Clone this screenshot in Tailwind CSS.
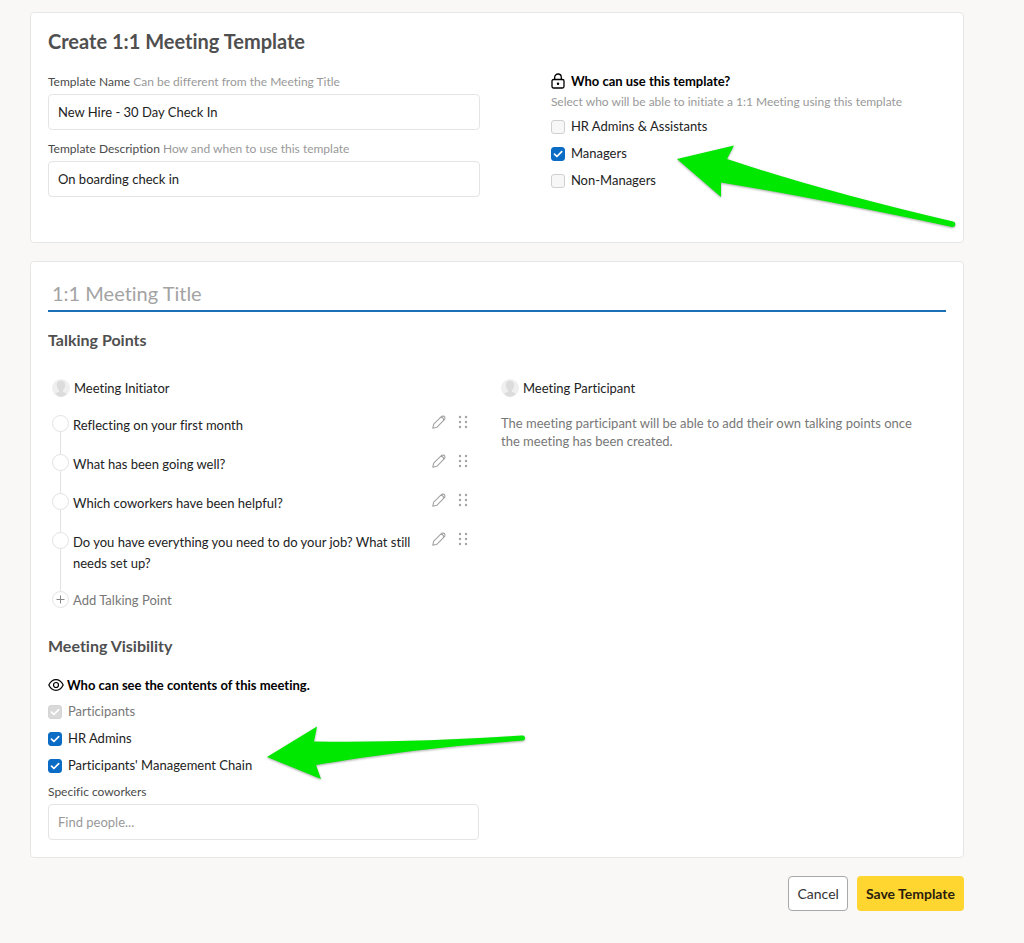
<!DOCTYPE html>
<html lang="en">
<head>
  <meta charset="UTF-8">
  <meta name="viewport" content="width=device-width, initial-scale=1.0">

  <title>Create 1:1 Meeting Template</title>

  <script src="https://cdn.jsdelivr.net/npm/@tailwindcss/browser@4"></script>
</head>
<body class="min-h-screen bg-[#faf8f6] pt-3 pb-8 pl-[30px] pr-[60px] font-['Lato',sans-serif] text-[13px] text-[#222] [font-variant-ligatures:none]">

  <!-- icons used more than once -->
  <svg class="hidden">
    <symbol id="check" viewBox="0 0 14 14">
      <path d="M3.500 7.200l2.400 2.300 4.800-4.900" fill="none" stroke="currentColor" stroke-width="1.700" stroke-linecap="round" stroke-linejoin="round"/>
    </symbol>
    <symbol id="avatar" viewBox="0 0 18 18">
      <circle cx="9" cy="9" r="9" fill="#efefef"/>
      <path d="M9 1.800c-2.800 0-4.400 1.900-4.200 4.500.1 2.200 1 3.900 2.200 4.900v1.600c-1.500.7-3 1.200-3.900 2A9 9 0 0 0 9 18a9 9 0 0 0 5.900-3.200c-.9-.8-2.400-1.300-3.900-2v-1.600c1.200-1 2.100-2.700 2.200-4.900.1-2.600-1.400-4.500-4.200-4.500z" fill="#dcdcdc"/>
    </symbol>
    <symbol id="pencil" viewBox="0 0 14 14">
      <path d="M.8 13.200l.9-4 7.600-7.600a1.900 1.900 0 0 1 1.300-.5h.7a1.700 1.700 0 0 1 1.600 1.600v.7a1.900 1.900 0 0 1-.5 1.300l-7.600 7.600zM8.600 2.400l1.700.1 1.100 1.100.1 1.900" fill="none" stroke="currentColor" stroke-width="1.100" stroke-linejoin="round"/>
    </symbol>
    <symbol id="grip" viewBox="0 0 10 14">
      <g fill="currentColor">
        <circle cx="2" cy="2" r="1.200"/><circle cx="8" cy="2" r="1.200"/>
        <circle cx="2" cy="7" r="1.200"/><circle cx="8" cy="7" r="1.200"/>
        <circle cx="2" cy="12" r="1.200"/><circle cx="8" cy="12" r="1.200"/>
      </g>
    </symbol>
  </svg>

  <form>
    <section class="relative flex rounded border border-[#e8e6e4] bg-white px-[17px] pt-3.5 pb-[45px]">
      <div class="w-[56%]">
        <h1 class="text-xl leading-7 font-bold text-[#4f4f4f]">Create 1:1 Meeting Template</h1>

        <div class="mt-[19px] w-[86%]">
          <label for="name" class="block text-xs leading-4 text-[#4a4a4a]">Template Name <span class="text-[#999]">Can be different from the Meeting Title</span></label>
          <input id="name" type="text" value="New Hire - 30 Day Check In" class="mt-1 block h-9 w-full rounded border border-[#e4e4e4] px-[9px] outline-none">
        </div>

        <div class="mt-[11px] w-[86%]">
          <label for="description" class="block text-xs leading-4 text-[#4a4a4a]">Template Description <span class="text-[#999]">How and when to use this template</span></label>
          <input id="description" type="text" value="On boarding check in" class="mt-1 block h-9 w-full rounded border border-[#e4e4e4] px-[9px] outline-none">
        </div>
      </div>

      <fieldset class="flex-1 pt-11">
        <h2 class="flex items-center gap-1.5 leading-5 font-bold text-black">
          <svg class="h-4 w-[14px]" viewBox="0 0 14 16" fill="none" stroke="currentColor" stroke-width="1.300">
            <rect x="1" y="6.500" width="12" height="8.500" rx="1.500"/>
            <path d="M3.700 6.500V4.300a3.300 3.300 0 0 1 6.600 0v2.200"/>
            <circle cx="7" cy="10.800" r=".6" fill="currentColor"/>
          </svg>
          Who can use this template?
        </h2>
        <p class="mt-[3px] text-xs leading-4 text-[#999]">Select who will be able to initiate a 1:1 Meeting using this template</p>

        <div class="mt-[3px]">
          <label class="flex h-[27px] items-center gap-1.5">
            <span class="grid">
              <input type="checkbox" class="peer col-start-1 row-start-1 size-3.5 appearance-none rounded-[3px] border border-[#d0d0d0] bg-[#f7f7f7] checked:border-[#0b6cc6] checked:bg-[#0b6cc6]">
              <svg class="pointer-events-none invisible col-start-1 row-start-1 size-3.5 text-white peer-checked:visible"><use href="#check"/></svg>
            </span>
            HR Admins &amp; Assistants
          </label>
          <label class="flex h-[27px] items-center gap-1.5">
            <span class="grid">
              <input type="checkbox" checked class="peer col-start-1 row-start-1 size-3.5 appearance-none rounded-[3px] border border-[#d0d0d0] bg-[#f7f7f7] checked:border-[#0b6cc6] checked:bg-[#0b6cc6]">
              <svg class="pointer-events-none invisible col-start-1 row-start-1 size-3.5 text-white peer-checked:visible"><use href="#check"/></svg>
            </span>
            Managers
          </label>
          <label class="flex h-[27px] items-center gap-1.5">
            <span class="grid">
              <input type="checkbox" class="peer col-start-1 row-start-1 size-3.5 appearance-none rounded-[3px] border border-[#d0d0d0] bg-[#f7f7f7] checked:border-[#0b6cc6] checked:bg-[#0b6cc6]">
              <svg class="pointer-events-none invisible col-start-1 row-start-1 size-3.5 text-white peer-checked:visible"><use href="#check"/></svg>
            </span>
            Non-Managers
          </label>
        </div>
      </fieldset>

      <!-- callout arrow -->
      <svg class="pointer-events-none absolute top-[127px] right-[3px] h-[92px] w-[284px] drop-shadow-[0_1px_1px_rgba(0,0,0,0.35)]" viewBox="0 0 284 92">
        <path d="M1 19L58 5.500L51 19Q150 52 277 81.500A2.500 2.500 0 0 1 276 87Q150 60 45 42.500L45 57z" fill="#00e800"/>
      </svg>
    </section>

    <section class="mt-[18px] rounded border border-[#e8e6e4] bg-white px-[17px] pt-[13px] pb-[17px]">
      <input type="text" aria-label="1:1 Meeting Title" placeholder="1:1 Meeting Title" class="block h-[37px] w-full border-b-2 border-[#1b70b8] px-1 text-xl outline-none placeholder:text-[#a3a3a3]">

      <h2 class="mt-[18px] text-base leading-5 font-bold text-[#4f4f4f]">Talking Points</h2>

      <div class="mt-7 grid grid-cols-2">
        <div class="pl-1">
          <h3 class="flex items-center gap-1 leading-5">
            <svg class="size-[18px]"><use href="#avatar"/></svg>
            Meeting Initiator
          </h3>

          <ul class="mt-[17px] w-[420px] max-w-full">
            <li class="flex">
              <div class="mr-1 flex w-[17px] flex-col items-center">
                <span class="size-[17px] shrink-0 rounded-full border border-[#e2e2e2]"></span>
                <span class="w-px flex-1 bg-[#e2e2e2]"></span>
              </div>
              <p class="flex-1 pb-[18px] leading-[21px]">Reflecting on your first month</p>
              <button type="button" aria-label="Edit" class="ml-2 flex h-3.5 text-[#a3a3a3]"><svg class="size-3.5"><use href="#pencil"/></svg></button>
              <button type="button" aria-label="Move" class="mr-1 ml-3 flex h-3.5 text-[#a3a3a3]"><svg class="h-3.5 w-2.5"><use href="#grip"/></svg></button>
            </li>
            <li class="flex">
              <div class="mr-1 flex w-[17px] flex-col items-center">
                <span class="size-[17px] shrink-0 rounded-full border border-[#e2e2e2]"></span>
                <span class="w-px flex-1 bg-[#e2e2e2]"></span>
              </div>
              <p class="flex-1 pb-[18px] leading-[21px]">What has been going well?</p>
              <button type="button" aria-label="Edit" class="ml-2 flex h-3.5 text-[#a3a3a3]"><svg class="size-3.5"><use href="#pencil"/></svg></button>
              <button type="button" aria-label="Move" class="mr-1 ml-3 flex h-3.5 text-[#a3a3a3]"><svg class="h-3.5 w-2.5"><use href="#grip"/></svg></button>
            </li>
            <li class="flex">
              <div class="mr-1 flex w-[17px] flex-col items-center">
                <span class="size-[17px] shrink-0 rounded-full border border-[#e2e2e2]"></span>
                <span class="w-px flex-1 bg-[#e2e2e2]"></span>
              </div>
              <p class="flex-1 pb-[18px] leading-[21px]">Which coworkers have been helpful?</p>
              <button type="button" aria-label="Edit" class="ml-2 flex h-3.5 text-[#a3a3a3]"><svg class="size-3.5"><use href="#pencil"/></svg></button>
              <button type="button" aria-label="Move" class="mr-1 ml-3 flex h-3.5 text-[#a3a3a3]"><svg class="h-3.5 w-2.5"><use href="#grip"/></svg></button>
            </li>
            <li class="flex">
              <div class="mr-1 flex w-[17px] flex-col items-center">
                <span class="size-[17px] shrink-0 rounded-full border border-[#e2e2e2]"></span>
                <span class="w-px flex-1 bg-[#e2e2e2]"></span>
              </div>
              <p class="flex-1 pb-[17px] leading-[21px]">Do you have everything you need to do your job? What still needs set up?</p>
              <button type="button" aria-label="Edit" class="ml-2 flex h-3.5 text-[#a3a3a3]"><svg class="size-3.5"><use href="#pencil"/></svg></button>
              <button type="button" aria-label="Move" class="mr-1 ml-3 flex h-3.5 text-[#a3a3a3]"><svg class="h-3.5 w-2.5"><use href="#grip"/></svg></button>
            </li>
          </ul>

          <button type="button" class="flex items-center gap-1 leading-4 text-[#777]">
            <svg class="size-[17px]" viewBox="0 0 17 17" fill="none">
              <circle cx="8.500" cy="8.500" r="8" stroke="#e2e2e2"/>
              <path d="M4.500 8.500h8M8.500 4.500v8" stroke="#888"/>
            </svg>
            Add Talking Point
          </button>
        </div>

        <div class="pl-1">
          <h3 class="flex items-center gap-1 leading-5">
            <svg class="size-[18px]"><use href="#avatar"/></svg>
            Meeting Participant
          </h3>
          <p class="mt-4 pr-4 leading-[18px] text-[#777]">The meeting participant will be able to add their own talking points once the meeting has been created.</p>
        </div>
      </div>

      <h2 class="mt-7 text-base leading-5 font-bold text-[#4f4f4f]">Meeting Visibility</h2>

      <div class="relative mt-[19px]">
        <h3 class="flex items-center gap-[3px] leading-5 font-bold text-black">
          <svg class="h-4 w-4" viewBox="0 0 16 16" fill="none" stroke="currentColor" stroke-width="1.200">
            <path d="M.8 8C2.500 4.600 5 2.700 8 2.700s5.500 1.900 7.200 5.300C13.500 11.400 11 13.300 8 13.300S2.500 11.400.8 8z"/>
            <circle cx="8" cy="8" r="2.500"/>
          </svg>
          Who can see the contents of this meeting.
        </h3>

        <div class="mt-[3px]">
          <label class="flex h-[27px] items-center gap-1.5 text-[#777]">
            <span class="grid">
              <input type="checkbox" checked disabled class="col-start-1 row-start-1 size-3.5 appearance-none rounded-[3px] border border-[#d4d4d4] bg-[#d9d9d9]">
              <svg class="pointer-events-none col-start-1 row-start-1 size-3.5 text-white"><use href="#check"/></svg>
            </span>
            Participants
          </label>
          <label class="flex h-[27px] items-center gap-1.5">
            <span class="grid">
              <input type="checkbox" checked class="peer col-start-1 row-start-1 size-3.5 appearance-none rounded-[3px] border border-[#d0d0d0] bg-[#f7f7f7] checked:border-[#0b6cc6] checked:bg-[#0b6cc6]">
              <svg class="pointer-events-none invisible col-start-1 row-start-1 size-3.5 text-white peer-checked:visible"><use href="#check"/></svg>
            </span>
            HR Admins
          </label>
          <label class="flex h-[27px] items-center gap-1.5">
            <span class="grid">
              <input type="checkbox" checked class="peer col-start-1 row-start-1 size-3.5 appearance-none rounded-[3px] border border-[#d0d0d0] bg-[#f7f7f7] checked:border-[#0b6cc6] checked:bg-[#0b6cc6]">
              <svg class="pointer-events-none invisible col-start-1 row-start-1 size-3.5 text-white peer-checked:visible"><use href="#check"/></svg>
            </span>
            Participants' Management Chain
          </label>
        </div>

        <!-- callout arrow -->
        <svg class="pointer-events-none absolute top-[47px] left-[216px] h-[64px] w-[264px] drop-shadow-[0_1px_1px_rgba(0,0,0,0.35)]" viewBox="0 0 264 64">
          <path d="M3 35L53 4.500L50 19.500Q150 21 258 13.500A2.500 2.500 0 0 1 259 18.500Q150 26 52 43L57 57z" fill="#00e800"/>
        </svg>
      </div>

      <div class="mt-[5px] w-[48%]">
        <label for="people" class="block text-xs leading-4 text-[#4a4a4a]">Specific coworkers</label>
        <input id="people" type="text" placeholder="Find people..." class="mt-1 block h-9 w-full rounded border border-[#e4e4e4] px-[9px] outline-none placeholder:text-[#999]">
      </div>
    </section>

    <div class="mt-[18px] flex justify-end gap-[9px] text-sm">
      <button type="button" class="h-[35px] rounded border border-[#a8a8a8] bg-white px-2 text-[#333]">Cancel</button>
      <button type="submit" class="h-[35px] rounded bg-[#ffd530] px-[9px] font-bold text-[#2b1d0e]">Save Template</button>
    </div>
  </form>

</body>
</html>
